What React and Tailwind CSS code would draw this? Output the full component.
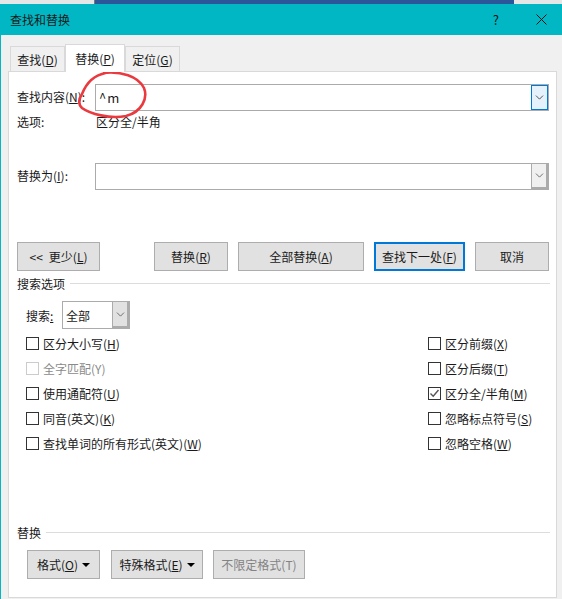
import { ChevronDown } from "lucide-react";

// one label with its underlined access key, e.g. 查找(D)
const Key = ({ text, k, tail = ")" }) => (
  <span className="whitespace-nowrap">
    {text}(<u>{k}</u>{tail}
  </span>
);

const Tab = ({ active, w, children }) => (
  <div
    className={
      active
        ? "relative z-10 h-[28px] -mb-px flex items-center justify-center border border-b-0 border-[#d9d9d9] bg-white"
        : "h-[25px] flex items-center justify-center border border-b-0 border-[#d9d9d9] bg-[#f0f0f0]"
    }
    style={{ width: w }}
  >
    {children}
  </div>
);

const Btn = ({ w, focus, disabled, children }) => (
  <div
    className={`h-[29px] flex shrink-0 items-center justify-center bg-[#e1e1e1] ${
      focus ? "border-2 border-[#0078d7]" : "border border-[#adadad]"
    } ${disabled ? "text-[#838383]" : ""}`}
    style={{ width: w }}
  >
    {children}
  </div>
);

const Combo = ({ value, active }) => (
  <div className="h-[27px] ml-[78px] w-[454px] flex border border-[#ababab] bg-white">
    <div className="flex-1 pl-[3px] flex items-center text-[13px] tracking-[1px]">{value}</div>
    <div
      className={
        active
          ? "w-[17px] flex items-center justify-center border border-[#0078d7] bg-[#e5f1fb]"
          : "w-[17px] flex items-center justify-center border-l border-[#ababab] border-b-2 border-r-2 bg-[#f0f0f0]"
      }
    >
      <ChevronDown size={13} strokeWidth={1.5} className={active ? "text-[#333]" : "text-[#555]"} />
    </div>
  </div>
);

const Check = ({ checked, disabled, children }) => (
  <div className={`h-[25px] flex items-center ${disabled ? "text-[#8a8a8a]" : ""}`}>
    <div
      className={`w-[13px] h-[13px] mr-[4px] shrink-0 border bg-white flex items-center justify-center ${
        disabled ? "border-[#cccccc]" : "border-[#333333]"
      }`}
    >
      {checked && (
        <svg width="11" height="11" viewBox="0 0 11 11">
          <path d="M1.5 5.5 L4.2 8.2 L9.5 2" fill="none" stroke="#555" strokeWidth="1.4" />
        </svg>
      )}
    </div>
    {children}
  </div>
);

const Section = ({ title, lineClass }) => (
  <div className="h-[15px] flex items-center">
    <span className="whitespace-nowrap">{title}</span>
    <div className={`h-px flex-1 bg-[#dcdcdc] ${lineClass}`} />
  </div>
);

const Caret = () => (
  <span className="ml-[4px] w-0 h-0 border-x-[4px] border-x-transparent border-t-[4px] border-t-black" />
);

export default function App() {
  return (
    <div
      className="relative w-[562px] h-[599px] overflow-hidden bg-[#f0f0f0] text-[12px] leading-[15px] text-[#1a1a1a]"
      style={{ fontFamily: '"Noto Sans CJK SC", "Liberation Sans", sans-serif' }}
    >
      {/* strip of the window behind */}
      <div className="h-[4px] flex bg-[#e6e6e6]">
        <div className="w-[95px] border-r border-[#777]" />
        <div className="w-[419px] bg-[#2b579a]" />
      </div>

      <div className="h-[31px] flex items-center bg-[#00b7c3] pl-[10px] pr-[15px]">
        <span className="flex-1 text-[12px]">查找和替换</span>
        <span className="mr-[37px] text-[13px] text-[#111]">?</span>
        <svg width="11" height="11" viewBox="0 0 11 11">
          <path d="M0.5 0.5 L10.5 10.5 M10.5 0.5 L0.5 10.5" stroke="#111" strokeWidth="1" fill="none" />
        </svg>
      </div>

      <div className="h-[564px] border-l border-[#00b7c3] pl-[7px] pr-[5px] pt-[9px]">
        <div className="h-[27px] flex items-end pl-[2px]">
          <Tab w={55}><Key text="查找" k="D" /></Tab>
          <Tab active w={60}><Key text="替换" k="P" /></Tab>
          <Tab w={55}><Key text="定位" k="G" /></Tab>
        </div>

        <div className="w-[549px] h-[527px] border border-[#d9d9d9] bg-white pl-[8px] pr-[6px] pt-[12px]">
          <div className="relative">
            <div className="absolute left-0 top-[5px]">
              <Key text="查找内容" k="N" tail="):" />
            </div>
            <Combo value="^m" active />
          </div>

          <div className="h-[15px] mt-[3px] flex">
            <span className="w-[79px]">选项:</span>
            <span>区分全/半角</span>
          </div>

          <div className="relative mt-[34px]">
            <div className="absolute left-0 top-[5px]">
              <Key text="替换为" k="I" tail="):" />
            </div>
            <Combo value="" />
          </div>

          <div className="mt-[52px] flex">
            <Btn w={83}>
              <span className="mr-[6px]">{"<<"}</span>
              <Key text="更少" k="L" />
            </Btn>
            <div className="w-[54px]" />
            <Btn w={74}><Key text="替换" k="R" /></Btn>
            <div className="w-[10px]" />
            <Btn w={126}><Key text="全部替换" k="A" /></Btn>
            <div className="w-[10px]" />
            <Btn w={91} focus><Key text="查找下一处" k="F" /></Btn>
            <div className="w-[10px]" />
            <Btn w={74}>取消</Btn>
          </div>

          <div className="mt-[5px]">
            <Section title="搜索选项" lineClass="ml-[5px]" />
          </div>

          <div className="mt-[10px] ml-[9px] flex items-center">
            <span className="w-[36px]">搜索<u>:</u></span>
            <div className="w-[68px] h-[28px] flex border border-[#ababab]">
              <div className="flex-1 pl-[3px] flex items-center">全部</div>
              <div className="w-[17px] flex items-center justify-center border-l border-[#ababab] border-b-2 border-r-2 bg-[#e1e1e1]">
                <ChevronDown size={13} strokeWidth={1.5} className="text-[#555]" />
              </div>
            </div>
          </div>

          <div className="mt-[2px] ml-[9px] flex">
            <div className="w-[402px]">
              <Check><Key text="区分大小写" k="H" /></Check>
              <Check disabled>全字匹配(Y)</Check>
              <Check><Key text="使用通配符" k="U" /></Check>
              <Check><Key text="同音(英文)" k="K" /></Check>
              <Check><Key text="查找单词的所有形式(英文)" k="W" /></Check>
            </div>
            <div>
              <Check><Key text="区分前缀" k="X" /></Check>
              <Check><Key text="区分后缀" k="T" /></Check>
              <Check checked><Key text="区分全/半角" k="M" /></Check>
              <Check><Key text="忽略标点符号" k="S" /></Check>
              <Check><Key text="忽略空格" k="W" /></Check>
            </div>
          </div>

          <div className="mt-[69px]">
            <Section title="替换" lineClass="ml-[5px]" />
          </div>

          <div className="mt-[10px] ml-[10px] flex">
            <Btn w={73}><Key text="格式" k="O" /><Caret /></Btn>
            <div className="w-[11px]" />
            <Btn w={92}><Key text="特殊格式" k="E" /><Caret /></Btn>
            <div className="w-[10px]" />
            <Btn w={92} disabled>不限定格式(T)</Btn>
          </div>
        </div>
      </div>

      {/* red hand-drawn circle on top of the find field */}
      <svg className="absolute left-[76px] top-[70px]" width="74" height="50" viewBox="0 0 74 50">
        <path
          d="M27 3 C45 1 62 6 68 18 C72 28 66 42 50 46 C34 49 14 44 6 38 C2 34 2 30 6 24 C10 14 18 5 30 3"
          fill="none"
          stroke="#ea3a3f"
          strokeWidth="2.6"
        />
      </svg>
    </div>
  );
}
